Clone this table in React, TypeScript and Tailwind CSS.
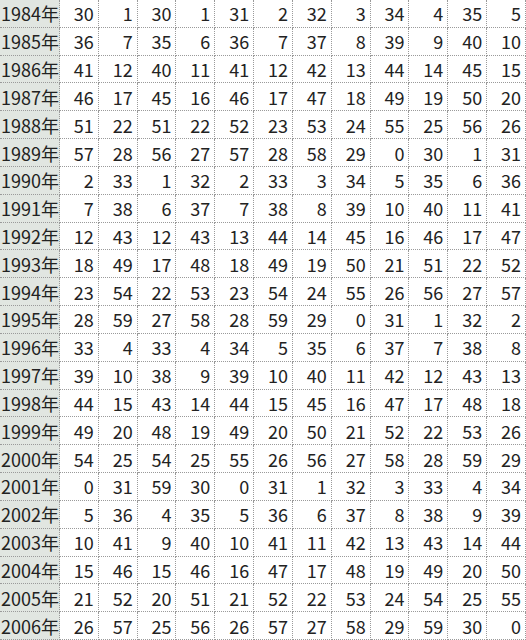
import React from "react";

const rows: [number, number[]][] = [
  [1984, [30, 1, 30, 1, 31, 2, 32, 3, 34, 4, 35, 5]],
  [1985, [36, 7, 35, 6, 36, 7, 37, 8, 39, 9, 40, 10]],
  [1986, [41, 12, 40, 11, 41, 12, 42, 13, 44, 14, 45, 15]],
  [1987, [46, 17, 45, 16, 46, 17, 47, 18, 49, 19, 50, 20]],
  [1988, [51, 22, 51, 22, 52, 23, 53, 24, 55, 25, 56, 26]],
  [1989, [57, 28, 56, 27, 57, 28, 58, 29, 0, 30, 1, 31]],
  [1990, [2, 33, 1, 32, 2, 33, 3, 34, 5, 35, 6, 36]],
  [1991, [7, 38, 6, 37, 7, 38, 8, 39, 10, 40, 11, 41]],
  [1992, [12, 43, 12, 43, 13, 44, 14, 45, 16, 46, 17, 47]],
  [1993, [18, 49, 17, 48, 18, 49, 19, 50, 21, 51, 22, 52]],
  [1994, [23, 54, 22, 53, 23, 54, 24, 55, 26, 56, 27, 57]],
  [1995, [28, 59, 27, 58, 28, 59, 29, 0, 31, 1, 32, 2]],
  [1996, [33, 4, 33, 4, 34, 5, 35, 6, 37, 7, 38, 8]],
  [1997, [39, 10, 38, 9, 39, 10, 40, 11, 42, 12, 43, 13]],
  [1998, [44, 15, 43, 14, 44, 15, 45, 16, 47, 17, 48, 18]],
  [1999, [49, 20, 48, 19, 49, 20, 50, 21, 52, 22, 53, 26]],
  [2000, [54, 25, 54, 25, 55, 26, 56, 27, 58, 28, 59, 29]],
  [2001, [0, 31, 59, 30, 0, 31, 1, 32, 3, 33, 4, 34]],
  [2002, [5, 36, 4, 35, 5, 36, 6, 37, 8, 38, 9, 39]],
  [2003, [10, 41, 9, 40, 10, 41, 11, 42, 13, 43, 14, 44]],
  [2004, [15, 46, 15, 46, 16, 47, 17, 48, 19, 49, 20, 50]],
  [2005, [21, 52, 20, 51, 21, 52, 22, 53, 24, 54, 25, 55]],
  [2006, [26, 57, 25, 56, 26, 57, 27, 58, 29, 59, 30, 0]],
];

export default function App() {
  return (
    <div
      className="w-[526px] h-[640px] bg-white overflow-hidden grid grid-cols-[60px_repeat(12,1fr)] grid-rows-[repeat(23,1fr)] text-[18px] text-[#222] leading-none"
      style={{ fontFamily: '"Noto Sans CJK JP", "Noto Sans", sans-serif' }}
    >
      {rows.map(([year, vals]) => (
        <React.Fragment key={year}>
          <div className="bg-[#e1e6e1] border-r border-b border-dotted border-[#9a9a9a] flex items-center pl-[1px]">
            {year}年
          </div>
          {vals.map((v, i) => (
            <div
              key={i}
              className="border-r border-b border-dotted border-[#9a9a9a] flex items-center justify-end pr-[4px]"
            >
              {v}
            </div>
          ))}
        </React.Fragment>
      ))}
    </div>
  );
}
